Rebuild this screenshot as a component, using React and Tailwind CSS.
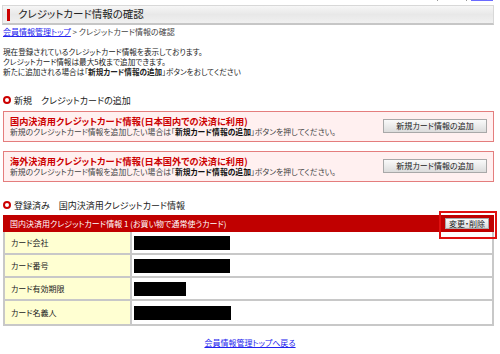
import React from "react";

const F = "[font-family:'Noto_Sans_CJK_JP',sans-serif] [font-feature-settings:'palt']";

function Btn({ children, className = "" }) {
  return (
    <div
      className={`flex items-center justify-center border border-[#a8a8a8] bg-gradient-to-b from-[#fafafa] to-[#dcdcdc] text-[8px] leading-none text-[#222] ${className}`}
    >
      {children}
    </div>
  );
}

function Heading({ children }) {
  return (
    <div className="flex items-center h-[10px] pl-[3px]">
      <span className="w-[8px] h-[8px] rounded-full border-[2px] border-[#cc0000] bg-white mr-[3px] shrink-0" />
      <span className="text-[9px] leading-none text-[#222] whitespace-pre">{children}</span>
    </div>
  );
}

function AddBox({ title }) {
  return (
    <div className="mx-[3px] mr-[6px] h-[31px] border border-[#e47d7d] bg-[#fff0f0] flex items-center justify-between pl-[6px] pr-[6px]">
      <div className="flex flex-col">
        <div className="h-[10px] leading-[10px] text-[9.2px] font-bold text-[#cc0000] whitespace-nowrap">{title}</div>
        <div className="h-[10px] leading-[10px] mt-[1px] text-[7.8px] text-[#444] whitespace-nowrap">
          新規のクレジットカード情報を追加したい場合は「<b className="text-[#111]">新規カード情報の追加</b>」ボタンを押してください。
        </div>
      </div>
      <Btn className="w-[104px] h-[14px] -mt-[2px]">新規カード情報の追加</Btn>
    </div>
  );
}

function Row({ label, w, last }) {
  return (
    <div className={`flex h-[23px] ${last ? "" : "border-b-2 border-[#c8c8c8]"}`}>
      <div className="w-[127px] bg-[#ffffd2] border-r-2 border-[#c8c8c8] flex items-center pl-[6px] text-[8px] text-[#222]">
        {label}
      </div>
      <div className="flex items-center pl-[2px]">
        <div className="h-[14px] bg-black" style={{ width: w }} />
      </div>
    </div>
  );
}

export default function App() {
  return (
    <div className={`relative w-[500px] h-[354px] bg-white overflow-hidden ${F}`}>
      <div className="flex justify-end h-[1px] pr-[7px]">
        <div className="w-[1px] h-[1px] bg-[#999] mr-[28px]" />
        <div className="w-[1px] h-[1px] bg-[#999] mr-[4px]" />
        <div className="w-[22px] h-[1px] bg-[#6a6aff]" />
      </div>

      <div className="mt-[4px] ml-[2px] w-[492px] h-[20px] border border-[#d8d8d8] border-b-2 border-b-[#c6c6c6] bg-gradient-to-b from-[#f6f6f6] via-[#e8e8e8] to-[#f0f0f0] flex items-center">
        <div className="w-[3px] h-[12px] bg-[#cc0000] ml-[4px] mr-[8px]" />
        <span className="text-[10.5px] leading-none text-[#222]">クレジットカード情報の確認</span>
      </div>

      <div className="mt-[2px] h-[10px] leading-[10px] pl-[3px] text-[8px] text-[#444]">
        <a className="text-[#2222ee] underline">会員情報管理トップ</a> &gt; クレジットカード情報の確認
      </div>

      <div className="mt-[10px] pl-[3px] text-[7.6px] leading-[10px] text-[#222]">
        <div>現在登録されているクレジットカード情報を表示しております。</div>
        <div>クレジットカード情報は最大5枚まで追加できます。</div>
        <div>
          新たに追加される場合は「<b>新規カード情報の追加</b>」ボタンをおしてください
        </div>
      </div>

      <div className="mt-[18px]">
        <Heading>{"新規　クレジットカードの追加"}</Heading>
      </div>
      <div className="mt-[6px]">
        <AddBox title="国内決済用クレジットカード情報(日本国内での決済に利用)" />
      </div>
      <div className="mt-[9px]">
        <AddBox title="海外決済用クレジットカード情報(日本国外での決済に利用)" />
      </div>

      <div className="mt-[18px]">
        <Heading>{"登録済み　国内決済用クレジットカード情報"}</Heading>
      </div>

      <div className="mt-[5px] ml-[3px] w-[491px]">
        <div className="h-[17px] bg-[#c00000] flex items-center justify-between pl-[7px] pr-[5px]">
          <span className="text-[8px] leading-none text-white">国内決済用クレジットカード情報 1 (お買い物で通常使うカード)</span>
          <Btn className="w-[44px] h-[11px]">変更・削除</Btn>
        </div>
        <div className="border-2 border-t-0 border-[#c8c8c8]">
          <Row label="カード会社" w={96} />
          <Row label="カード番号" w={96} />
          <Row label="カード有効期限" w={52} />
          <Row label="カード名義人" w={97} last />
        </div>
      </div>

      <div className="mt-[12px] flex justify-center">
        <a className="text-[8px] leading-[10px] text-[#2222ee] underline">会員情報管理トップへ戻る</a>
      </div>

      <div className="absolute left-[439px] top-[211px] w-[58px] h-[28px] border-2 border-[#e01010]" />
    </div>
  );
}
